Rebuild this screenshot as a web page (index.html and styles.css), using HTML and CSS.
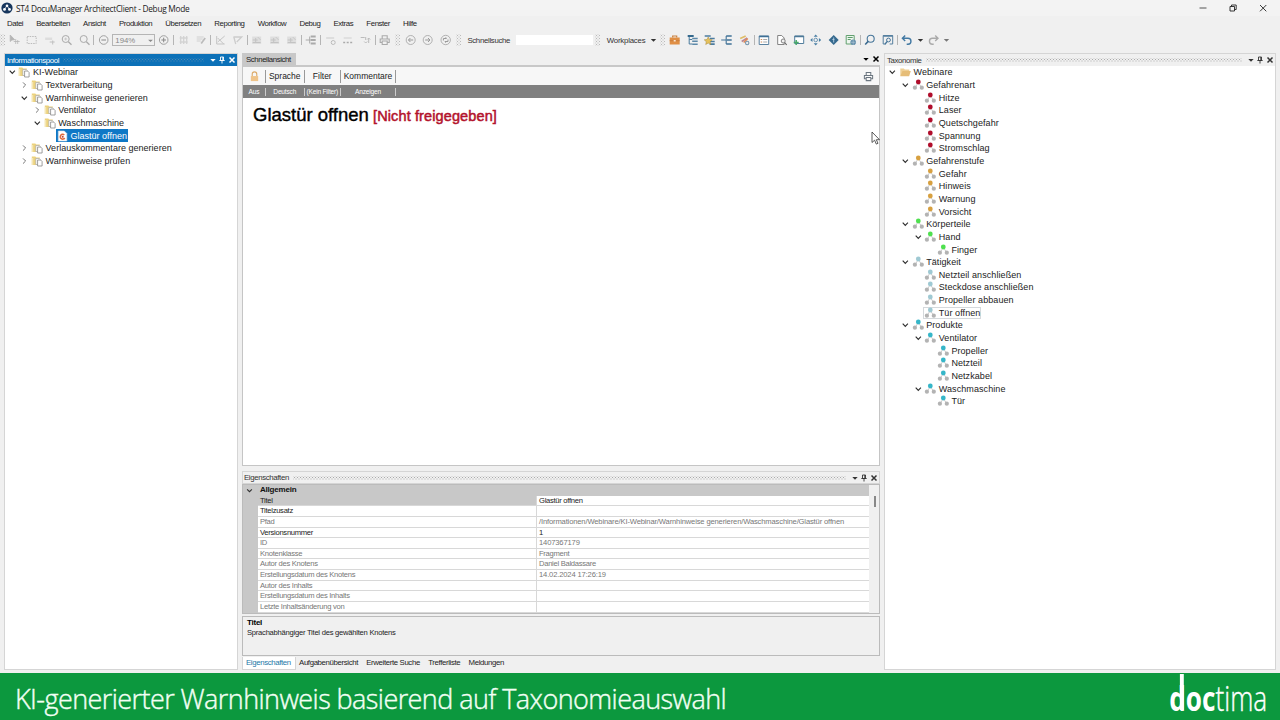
FILE: index.html
```
<!DOCTYPE html>
<html lang="de">
<head>
  <meta charset="UTF-8">
  <title>ST4 DocuManager ArchitectClient - Debug Mode</title>
  <link rel="stylesheet" href="styles.css">
</head>
<body>
  <!-- icon set -->
  <svg class="sprite" width="0" height="0">
    <symbol id="chev" viewBox="0 0 12 12"><path d="M3.4 4.7 6 7.3l2.6-2.6" fill="none" stroke="#333" stroke-width="1.2"/></symbol>
    <symbol id="chev-r" viewBox="0 0 12 12"><path d="M4.7 3.4 7.3 6 4.7 8.6" fill="none" stroke="#777" stroke-width="1"/></symbol>
    <symbol id="folder-doc" viewBox="0 0 12 12"><path d="M.5 1.500h3.500l1 1h3.500v7.500H.5z" fill="#ecd27e"/><path d="M.5 3h1.500v7H.5z" fill="#f5e6b3"/><path d="M4.500 3.500h3.500l1 1V9.500H4.500z" fill="#fff" stroke="#aaa" stroke-width=".7"/><path d="M6.300 5h3l1.500 1.500V11H6.300z" fill="#fff" stroke="#888" stroke-width=".8"/></symbol>
    <symbol id="folder" viewBox="0 0 12 12"><path d="M1 10V2.500h3.500l1 1H10V5" fill="#efcf95"/><path d="M1 10.200 3.200 5H11.500L9.800 10.200z" fill="#e6bd78"/></symbol>
    <symbol id="frag" viewBox="0 0 12 12"><path d="M2 1h6l2.500 2.500V11H2z" fill="#fff" stroke="#d8dee5" stroke-width=".6"/><path d="M8 5A2.400 2.400 0 1 0 8.400 8" fill="none" stroke="#df6b3d" stroke-width="1.500"/><circle cx="6.400" cy="6.700" r="1" fill="#b8453a"/></symbol>
    <symbol id="tax" viewBox="0 0 12 12"><path d="M6 3.500 2.800 8.500M6 3.500 9.400 8.500" stroke="#bbb" stroke-width=".8"/><circle cx="6" cy="3" r="2.400" fill="currentColor"/><circle cx="2.600" cy="8.700" r="2.100" fill="#b3b3b3"/><circle cx="9.500" cy="8.700" r="2.100" fill="#b3b3b3"/></symbol>
    <symbol id="down" viewBox="0 0 8 8"><path d="M1.300 3h5.400L4 5.800z" fill="currentColor"/></symbol>
    <symbol id="pin" viewBox="0 0 8 8"><path d="M2.500 1h3v3.500h-3zM1.300 4.500h5.400M4 4.500V7.500" fill="none" stroke="currentColor" stroke-width=".9"/><path d="M4.700 1v3.500" stroke="currentColor" stroke-width=".8"/></symbol>
    <symbol id="x" viewBox="0 0 8 8"><path d="m1.500 1.500 5 5m0-5-5 5" stroke="currentColor" stroke-width="1.500"/></symbol>
    <symbol id="cursor-add" viewBox="0 0 12 12"><path d="M1.500 1v6.500L3.200 6l2.800-.3zM7 5v5M5 7.500h6M9 6v4" fill="#b5b5b5" stroke="#b5b5b5" stroke-width=".8"/></symbol>
    <symbol id="marquee" viewBox="0 0 12 12"><path d="M1.500 2.500h9v7h-9z" fill="none" stroke="#bbb" stroke-dasharray="1.500 1"/></symbol>
    <symbol id="rect-arrow" viewBox="0 0 12 12"><path d="M1.500 3.500h7v2.500h-7z" fill="#ddd"/><path d="M6 8h5M9 6.500v4" stroke="#c0c0c0"/></symbol>
    <symbol id="zoom" viewBox="0 0 12 12"><circle cx="5" cy="5" r="3.500" fill="none" stroke="#aaa"/><path d="M7.700 7.700 10.800 10.800" stroke="#aaa" stroke-width="1.300"/><path d="M3.500 5h3M5 3.500v3" stroke="#bbb" stroke-width=".7"/></symbol>
    <symbol id="zoom-b" viewBox="0 0 12 12"><circle cx="5" cy="5" r="3.500" fill="none" stroke="#aaa"/><path d="M7.700 7.700 10.800 10.800" stroke="#aaa" stroke-width="1.300"/></symbol>
    <symbol id="minus" viewBox="0 0 12 12"><circle cx="6" cy="6" r="4.300" fill="none" stroke="#999" stroke-width=".9"/><path d="M3.700 6h4.600" stroke="#888"/></symbol>
    <symbol id="plus" viewBox="0 0 12 12"><circle cx="6" cy="6" r="4.300" fill="none" stroke="#999" stroke-width=".9"/><path d="M3.700 6h4.600M6 3.700v4.600" stroke="#888"/></symbol>
    <symbol id="grid" viewBox="0 0 12 12"><path d="M3 2v8M6 2v8M9 2v8M2 4h8M2 8h8" stroke="#d3d3d3" stroke-width="1.300"/></symbol>
    <symbol id="edit" viewBox="0 0 12 12"><path d="M2 3h7M2 5h6M2 7h4" stroke="#d0d0d0"/><path d="M10.500 4 6.500 9.500" stroke="#bbb" stroke-width="1.700"/></symbol>
    <symbol id="chart-x" viewBox="0 0 12 12"><path d="M2 2v8h8M3 4l6 6M3 8l7-6" fill="none" stroke="#c4c4c4"/></symbol>
    <symbol id="flag" viewBox="0 0 12 12"><path d="M2 2.500 4 10M2 3h8L5 8" fill="none" stroke="#ccc" stroke-width="1.300"/></symbol>
    <symbol id="table" viewBox="0 0 12 12"><path d="M1.500 2.500h9v7.500h-9z" fill="#dedede"/><path d="M2 6h5M2 8.500h8M5 4v5" stroke="#c3c3c3"/><path d="m7 3 3 3" stroke="#c9c9c9"/></symbol>
    <symbol id="tree-g" viewBox="0 0 12 12"><path d="M1 6h5M5 2.500v7" stroke="#aaa"/><path d="M6 2.500h5M6 6h5M6 9.500h5" stroke="#aaa" stroke-width="1.800"/></symbol>
    <symbol id="step" viewBox="0 0 12 12"><path d="M1.500 3h8v2h-8z" fill="#ddd"/><circle cx="8.500" cy="8.500" r="2" fill="none" stroke="#bbb"/></symbol>
    <symbol id="dots" viewBox="0 0 12 12"><path d="M2 3h8v2H2z" fill="#e0e0e0"/><path d="M1.500 8.500h2m1.500 0h2m1.500 0h2" stroke="#aaa" stroke-width="1.700"/></symbol>
    <symbol id="down-up" viewBox="0 0 12 12"><path d="M1 3.500h4M6 6V3M9 9V4M7.500 5.500 9 4l1.500 1.500M4.500 7.500 6 9l1.500-1.500" fill="none" stroke="#bbb"/></symbol>
    <symbol id="print" viewBox="0 0 12 12"><path d="M3.500 5V1.700h5V5M3 8.500H1.500V5h9v3.500H9M3.500 7h5v3.500h-5z" fill="none" stroke="currentColor" stroke-width="1.100"/></symbol>
    <symbol id="back" viewBox="0 0 12 12"><circle cx="6" cy="6" r="4.500" fill="none" stroke="#aaa" stroke-width=".9"/><path d="M8.500 6H4M5.700 4 3.700 6l2 2" fill="none" stroke="#999"/></symbol>
    <symbol id="fwd" viewBox="0 0 12 12"><circle cx="6" cy="6" r="4.500" fill="none" stroke="#aaa" stroke-width=".9"/><path d="M3.500 6H8M6.300 4l2 2-2 2" fill="none" stroke="#999"/></symbol>
    <symbol id="refresh" viewBox="0 0 12 12"><circle cx="6" cy="6" r="4.700" fill="none" stroke="#aaa" stroke-width=".9"/><path d="M3.700 6.500V4.500h3L6 3.300M8.300 5.500v2h-3L6 8.700" fill="none" stroke="#999"/></symbol>
    <symbol id="case" viewBox="0 0 12 12"><path d="M4 3.500V2h4v1.500" fill="none" stroke="#c9803f" stroke-width="1.200"/><path d="M1 3.500h10v7H1z" fill="#e08f45"/><path d="M1 6.700h10" stroke="#c47838" stroke-width=".8"/><path d="M5 6h2v1.500H5z" fill="#fbe6cf"/></symbol>
    <symbol id="tree-b" viewBox="0 0 12 12"><path d="M2.500 2v8h3M2.500 5.500h3" fill="none" stroke="#4a7b9d"/><path d="M1 2h6" stroke="#35698d" stroke-width="2"/><path d="M5.500 4.500H11M5.500 7.300H11M5.500 10.200H11" stroke="#5d89a9" stroke-width="1.500"/></symbol>
    <symbol id="tree-star" viewBox="0 0 12 12"><path d="M1 2h6M6 4.500h5M6 7.500h5M6 10.200h5" stroke="#4c7c9f" stroke-width="1.700"/><path d="m4.500 3 1.200 2.500 2.800.3-2.100 1.900.6 2.800-2.500-1.400L2 10.500l.6-2.800L.5 5.800l2.800-.3z" fill="#e5c15c" stroke="#a88b3b" stroke-width=".5"/></symbol>
    <symbol id="branch" viewBox="0 0 12 12"><path d="M.5 6h5.500M5.500 2v8" stroke="#3f7197" stroke-width="1.100"/><path d="M5.500 2H11M6 6h5M5.500 10H11" stroke="#3f7197" stroke-width="1.700"/></symbol>
    <symbol id="pens" viewBox="0 0 12 12"><path d="M1.500 4.500 7 2" stroke="#e0bd68" stroke-width="1.800"/><path d="M3 7.500 8.500 4" stroke="#b98694" stroke-width="1.500"/><path d="m5 8.500 4-4" stroke="#e48a55" stroke-width="1.700"/><circle cx="8.500" cy="9" r="1.700" fill="none" stroke="#7998af" stroke-width="1.100"/></symbol>
    <symbol id="list" viewBox="0 0 12 12"><path d="M1.500 2h9.500v8.500H1.500z" fill="#fff" stroke="#5a82a0"/><path d="M1.500 2.500h9.500" stroke="#3e6f95" stroke-width="1.500"/><path d="M3 5.500h1.500M3 8h1.500" stroke="#d28b59"/><path d="M5.500 5.500H9.500M5.500 8H9.500" stroke="#aaa"/></symbol>
    <symbol id="doc-zoom" viewBox="0 0 12 12"><path d="M2 1.500h4l2.500 2.500V10.500H2z" fill="#fff" stroke="#777" stroke-width=".9"/><circle cx="7.500" cy="7" r="2" fill="#eee" stroke="#777" stroke-width=".9"/><path d="m9 8.500 2 2.500" stroke="#666" stroke-width="1.200"/></symbol>
    <symbol id="win-add" viewBox="0 0 12 12"><path d="M2 2h9v7.500H2z" fill="#fff" stroke="#527e9d"/><path d="M2 2.500h9" stroke="#4c7897" stroke-width="1.600"/><path d="M1 8.500h5M3.500 6v5" stroke="#48a86a" stroke-width="1.500"/></symbol>
    <symbol id="move" viewBox="0 0 12 12"><path d="m6 .5 2 2.300H4zM6 11.500 8 9.200H4zM.5 6l2.300-2v4zM11.500 6 9.200 4v4z" fill="#477da3"/><circle cx="6" cy="6" r="1.800" fill="none" stroke="#6c96b4"/></symbol>
    <symbol id="diamond" viewBox="0 0 12 12"><path d="m6 1 5 5-5 5-5-5z" fill="#35698e"/><path d="M6 3.500v5M4.700 5.500h2" stroke="#b9d3e5" stroke-width=".9"/></symbol>
    <symbol id="globe-doc" viewBox="0 0 12 12"><path d="M1.500 1.500h8V10h-8z" fill="#edf5ee" stroke="#62a06f"/><path d="M3 3.500h5M3 5.500h3" stroke="#5a9d69"/><circle cx="8.500" cy="8.300" r="2.800" fill="#658fab"/><path d="M6 8.300h5M8.500 5.500v5.500" stroke="#bed0dc" stroke-width=".5"/></symbol>
    <symbol id="search" viewBox="0 0 12 12"><circle cx="7" cy="4.700" r="3.500" fill="none" stroke="#47769a" stroke-width="1.100"/><path d="M4.500 7.400 1.500 10.500" stroke="#3a6a8f" stroke-width="1.600"/></symbol>
    <symbol id="search-win" viewBox="0 0 12 12"><path d="M3 10H1.500V1.500h9.500V10H8" fill="none" stroke="#557f9f"/><path d="M1.500 2h9.500" stroke="#557f9f" stroke-width="1.500"/><circle cx="6.800" cy="6" r="1.900" fill="none" stroke="#47769a"/><path d="M5.500 7.500 3 10.500" stroke="#47769a" stroke-width="1.300"/></symbol>
    <symbol id="undo" viewBox="0 0 12 12"><path d="M4.500 1.500 1.700 4.300 4.500 7M2 4.300h5.300a2.700 2.700 0 0 1 0 5.900H6" fill="none" stroke="currentColor" stroke-width="1.400"/></symbol>
  </svg>

  <div class="window">
    <header class="titlebar">
      <svg class="app-icon" viewBox="0 0 12 12"><circle cx="6" cy="6" r="5.600" fill="#17365d"/><path d="M6 3.500 3.500 7.500M6 3.500l2.500 4" stroke="#fff" stroke-width=".7"/><circle cx="6" cy="3.700" r="1.300" fill="#fff"/><circle cx="3.500" cy="7.400" r="1.400" fill="#fff"/><circle cx="8.500" cy="7.400" r="1.400" fill="#fff"/></svg>
      <span>ST4 DocuManager ArchitectClient - Debug Mode</span>
      <div class="win-buttons">
        <svg viewBox="0 0 10 10"><path d="M1.500 5h7" stroke="#555" stroke-width="1"/></svg>
        <svg viewBox="0 0 10 10"><path d="M2 3.500h4.500V8H2zM3.500 3.500V2h4.700v4.500H6.500" fill="none" stroke="#222" stroke-width=".9"/></svg>
        <svg viewBox="0 0 10 10"><path d="m2 2 6.300 6.300m0-6.300L2 8.300" stroke="#222" stroke-width=".9"/></svg>
      </div>
    </header>

    <nav class="menu">
      <span>Datei</span><span>Bearbeiten</span><span>Ansicht</span><span>Produktion</span><span>Übersetzen</span><span>Reporting</span><span>Workflow</span><span>Debug</span><span>Extras</span><span>Fenster</span><span>Hilfe</span>
    </nav>

    <div class="toolbar">
      <i class="grip"></i>
      <svg><use href="#cursor-add"/></svg><svg><use href="#marquee"/></svg><svg><use href="#rect-arrow"/></svg><svg><use href="#zoom"/></svg><svg><use href="#zoom-b"/></svg>
      <i class="sep"></i>
      <svg><use href="#minus"/></svg>
      <div class="combo"><span>194%</span><svg><use href="#down"/></svg></div>
      <svg><use href="#plus"/></svg>
      <i class="sep"></i>
      <svg><use href="#grid"/></svg><svg><use href="#edit"/></svg>
      <i class="sep"></i>
      <svg><use href="#chart-x"/></svg><svg><use href="#flag"/></svg>
      <i class="sep"></i>
      <svg><use href="#table"/></svg><svg><use href="#table"/></svg><svg><use href="#table"/></svg>
      <i class="sep"></i>
      <svg><use href="#tree-g"/></svg>
      <i class="sep"></i>
      <svg><use href="#step"/></svg><svg><use href="#dots"/></svg><svg><use href="#down-up"/></svg>
      <i class="sep"></i>
      <svg class="grey"><use href="#print"/></svg>
      <i class="grip"></i>
      <svg><use href="#back"/></svg><svg><use href="#fwd"/></svg><svg><use href="#refresh"/></svg>
      <i class="grip"></i>
      <label class="search-label">Schnellsuche</label><div class="search"></div>
      <i class="grip"></i>
      <span class="workplaces">Workplaces</span><svg class="drop"><use href="#down"/></svg>
      <i class="grip"></i>
      <svg><use href="#case"/></svg><svg><use href="#tree-b"/></svg><svg><use href="#tree-star"/></svg><svg><use href="#branch"/></svg><svg><use href="#pens"/></svg>
      <i class="sep"></i>
      <svg><use href="#list"/></svg><svg><use href="#doc-zoom"/></svg><svg><use href="#win-add"/></svg><svg><use href="#move"/></svg><svg><use href="#diamond"/></svg><svg><use href="#globe-doc"/></svg>
      <i class="sep"></i>
      <svg><use href="#search"/></svg><svg><use href="#search-win"/></svg>
      <i class="sep"></i>
      <svg class="blue"><use href="#undo"/></svg><svg class="drop"><use href="#down"/></svg>
      <svg class="grey flip"><use href="#undo"/></svg><svg class="drop faded"><use href="#down"/></svg>
    </div>

    <main class="workspace">
      <section class="pane pool">
        <div class="pane-title active"><span>Informationspool</span><i class="dots"></i><svg><use href="#down"/></svg><svg><use href="#pin"/></svg><svg><use href="#x"/></svg></div>
        <div class="tree">
          <div class="row"><svg><use href="#chev"/></svg><svg><use href="#folder-doc"/></svg><span>KI-Webinar</span></div>
          <div class="row l1"><svg><use href="#chev-r"/></svg><svg><use href="#folder-doc"/></svg><span>Textverarbeitung</span></div>
          <div class="row l1"><svg><use href="#chev"/></svg><svg><use href="#folder-doc"/></svg><span>Warnhinweise generieren</span></div>
          <div class="row l2"><svg><use href="#chev-r"/></svg><svg><use href="#folder-doc"/></svg><span>Ventilator</span></div>
          <div class="row l2"><svg><use href="#chev"/></svg><svg><use href="#folder-doc"/></svg><span>Waschmaschine</span></div>
          <div class="row l3 leaf"><div class="selected"><svg><use href="#frag"/></svg><span>Glastür offnen</span></div></div>
          <div class="row l1"><svg><use href="#chev-r"/></svg><svg><use href="#folder-doc"/></svg><span>Verlauskommentare generieren</span></div>
          <div class="row l1"><svg><use href="#chev-r"/></svg><svg><use href="#folder-doc"/></svg><span>Warnhinweise prüfen</span></div>
        </div>
      </section>

      <div class="center">
        <div class="doc-tabs"><span>Schnellansicht</span><svg><use href="#down"/></svg><svg><use href="#x"/></svg></div>
        <section class="preview">
          <div class="filters">
            <div><svg class="lock" viewBox="0 0 12 12"><path d="M3.500 6V3.500a2.500 2.500 0 0 1 5 0V6" fill="none" stroke="#dba968" stroke-width="1.200"/><path d="M2 5.500h8v5.500H2z" fill="#efc48a"/></svg></div>
            <div>Sprache</div><div>Filter</div><div>Kommentare</div>
            <svg class="printer"><use href="#print"/></svg>
          </div>
          <div class="filter-values"><div>Aus</div><div>Deutsch</div><div>(Kein Filter)</div><div>Anzeigen</div></div>
          <h1>Glastür offnen <span>[Nicht freigegeben]</span></h1>
        </section>

        <section class="props">
          <div class="pane-title"><span>Eigenschaften</span><i class="dots"></i><svg><use href="#down"/></svg><svg><use href="#pin"/></svg><svg><use href="#x"/></svg></div>
          <div class="grid">
            <div class="gutter"><svg><use href="#chev"/></svg></div>
            <div class="fields">
              <div class="category">Allgemein</div>
              <div class="field current"><span>Titel</span><span>Glastür offnen</span></div>
              <div class="field"><span>Titelzusatz</span><span></span></div>
              <div class="field readonly"><span>Pfad</span><span class="path">/Informationen/Webinare/KI-Webinar/Warnhinweise generieren/Waschmaschine/Glastür offnen</span></div>
              <div class="field"><span>Versionsnummer</span><span>1</span></div>
              <div class="field readonly"><span>ID</span><span class="num">1407367179</span></div>
              <div class="field readonly"><span>Knotenklasse</span><span>Fragment</span></div>
              <div class="field readonly"><span>Autor des Knotens</span><span>Daniel Baldassare</span></div>
              <div class="field readonly"><span>Erstellungsdatum des Knotens</span><span class="num">14.02.2024 17:26:19</span></div>
              <div class="field readonly"><span>Autor des Inhalts</span><span></span></div>
              <div class="field readonly"><span>Erstellungsdatum des Inhalts</span><span></span></div>
              <div class="field readonly"><span>Letzte Inhaltsänderung von</span><span></span></div>
            </div>
            <div class="scroll"><i></i></div>
          </div>
          <div class="help"><b>Titel</b><p>Sprachabhängiger Titel des gewählten Knotens</p></div>
        </section>
        <div class="bottom-tabs"><span class="on">Eigenschaften</span><span>Aufgabenübersicht</span><span>Erweiterte Suche</span><span>Trefferliste</span><span>Meldungen</span></div>
      </div>

      <section class="pane taxonomy">
        <div class="pane-title"><span>Taxonomie</span><i class="dots"></i><svg><use href="#down"/></svg><svg><use href="#pin"/></svg><svg><use href="#x"/></svg></div>
        <div class="tree">
          <div class="row"><svg><use href="#chev"/></svg><svg><use href="#folder"/></svg><span>Webinare</span></div>
          <div class="row l1 red"><svg><use href="#chev"/></svg><svg><use href="#tax"/></svg><span>Gefahrenart</span></div>
          <div class="row l2 leaf red"><svg><use href="#tax"/></svg><span>Hitze</span></div>
          <div class="row l2 leaf red"><svg><use href="#tax"/></svg><span>Laser</span></div>
          <div class="row l2 leaf red"><svg><use href="#tax"/></svg><span>Quetschgefahr</span></div>
          <div class="row l2 leaf red"><svg><use href="#tax"/></svg><span>Spannung</span></div>
          <div class="row l2 leaf red"><svg><use href="#tax"/></svg><span>Stromschlag</span></div>
          <div class="row l1 amber"><svg><use href="#chev"/></svg><svg><use href="#tax"/></svg><span>Gefahrenstufe</span></div>
          <div class="row l2 leaf amber"><svg><use href="#tax"/></svg><span>Gefahr</span></div>
          <div class="row l2 leaf amber"><svg><use href="#tax"/></svg><span>Hinweis</span></div>
          <div class="row l2 leaf amber"><svg><use href="#tax"/></svg><span>Warnung</span></div>
          <div class="row l2 leaf amber"><svg><use href="#tax"/></svg><span>Vorsicht</span></div>
          <div class="row l1 green"><svg><use href="#chev"/></svg><svg><use href="#tax"/></svg><span>Körperteile</span></div>
          <div class="row l2 green"><svg><use href="#chev"/></svg><svg><use href="#tax"/></svg><span>Hand</span></div>
          <div class="row l3 leaf green"><svg><use href="#tax"/></svg><span>Finger</span></div>
          <div class="row l1 pale"><svg><use href="#chev"/></svg><svg><use href="#tax"/></svg><span>Tätigkeit</span></div>
          <div class="row l2 leaf pale"><svg><use href="#tax"/></svg><span>Netzteil anschließen</span></div>
          <div class="row l2 leaf pale"><svg><use href="#tax"/></svg><span>Steckdose anschließen</span></div>
          <div class="row l2 leaf pale"><svg><use href="#tax"/></svg><span>Propeller abbauen</span></div>
          <div class="row l2 leaf pale"><div class="focused"><svg><use href="#tax"/></svg><span>Tür offnen</span></div></div>
          <div class="row l1 teal"><svg><use href="#chev"/></svg><svg><use href="#tax"/></svg><span>Produkte</span></div>
          <div class="row l2 teal"><svg><use href="#chev"/></svg><svg><use href="#tax"/></svg><span>Ventilator</span></div>
          <div class="row l3 leaf teal"><svg><use href="#tax"/></svg><span>Propeller</span></div>
          <div class="row l3 leaf teal"><svg><use href="#tax"/></svg><span>Netzteil</span></div>
          <div class="row l3 leaf teal"><svg><use href="#tax"/></svg><span>Netzkabel</span></div>
          <div class="row l2 teal"><svg><use href="#chev"/></svg><svg><use href="#tax"/></svg><span>Waschmaschine</span></div>
          <div class="row l3 leaf teal"><svg><use href="#tax"/></svg><span>Tür</span></div>
        </div>
      </section>
    </main>

    <footer class="caption">
      <p>KI-generierter Warnhinweis basierend auf Taxonomieauswahl</p>
      <svg class="logo" width="100" height="47" viewBox="0 0 100 47" fill="#fff">
        <g transform="scale(.77 1)"><text x=".4" y="38"><tspan class="logo-bold">doc</tspan><tspan class="logo-light">tima</tspan></text></g>
        <!-- long stem of the d -->
        <rect x="10.900" y="1" width="3.900" height="36"/>
      </svg>
    </footer>
  </div>

  <svg class="cursor" viewBox="0 0 10 14"><path d="M1 1v10.500l2.600-2.300 1.700 3.900 1.700-.8-1.700-3.600h3.200z" fill="#fff" stroke="#333" stroke-width=".8"/></svg>
</body>
</html>
```
FILE: styles.css
```
* {
  box-sizing: border-box;
}
body {
  margin: 0;
  width: 1280px;
  height: 720px;
  overflow: hidden;
  background: #f0f0f0;
  font-family: "Liberation Sans", Arial, sans-serif;
  font-size: 7.8px;
  letter-spacing: -0.4px;
  color: #222;
  white-space: nowrap;
}
.sprite {
  position: absolute;
}
svg {
  flex: none;
}
.window {
  display: flex;
  flex-direction: column;
  height: 720px;
}

/* title and menu */
.titlebar {
  display: flex;
  align-items: center;
  height: 16px;
  padding: 0 12px 0 1px;
  background: #f3f3f3;
  font-family: "Open Sans", sans-serif;
  font-size: 8.3px;
  letter-spacing: -0.28px;
}
.app-icon {
  width: 12px;
  height: 12px;
  margin-right: 3px;
}
.win-buttons {
  display: flex;
  gap: 20px;
  margin-left: auto;
}
.win-buttons svg {
  width: 10px;
  height: 10px;
}
.menu {
  display: flex;
  gap: 13.1px;
  height: 15px;
  padding: 0 7px;
  line-height: 15px;
}

/* toolbar */
.toolbar {
  display: flex;
  align-items: center;
  height: 18px;
  color: #333;
  letter-spacing: -0.3px;
}
.toolbar > svg {
  width: 17.4px;
  height: 12px;
}
.toolbar .grip {
  width: 5px;
  height: 12px;
  margin: 0 1.4px 0 2px;
  background-image: radial-gradient(circle, #bbb 0.7px, transparent 0.9px), radial-gradient(circle, #bbb 0.7px, transparent 0.9px);
  background-size: 3px 3px;
  background-position: 0 0, 1.5px 1.5px;
}
.toolbar .grip:first-child {
  margin: 0 1px 0 0;
}
.toolbar .sep {
  width: 1px;
  height: 10px;
  margin: 0 0.5px;
  background: #b5b5b5;
}
.combo {
  display: flex;
  align-items: center;
  justify-content: space-between;
  width: 43px;
  height: 12px;
  padding-left: 2px;
  border: 1px solid #b5b5b5;
  color: #888;
  letter-spacing: 0;
}
.combo svg {
  width: 7px;
  height: 7px;
}
.search-label {
  width: 54px;
  padding-left: 5px;
}
.search {
  width: 77px;
  height: 10px;
  background: #fff;
}
.workplaces {
  width: 45px;
  margin-left: 2px;
  padding-left: 3px;
  letter-spacing: -0.2px;
}
.toolbar svg.drop {
  width: 9px;
  height: 8px;
}
.grey {
  color: #aaa;
}
.blue {
  color: #4279a3;
}
.flip {
  transform: scaleX(-1);
}
.faded {
  color: #777;
}

/* docked panes */
.workspace {
  display: flex;
  gap: 4px;
  height: 617px;
  margin: 4px 4px 3px;
}
.pane {
  border: 1px solid #d5d5d5;
  background: #fff;
}
.pool {
  width: 234px;
}
.taxonomy {
  width: 392px;
}
.pane-title {
  display: flex;
  align-items: center;
  height: 12px;
  padding: 0 1px 0 2px;
  background: #f0f0f0;
  color: #333;
  letter-spacing: -0.35px;
}
.pane-title.active {
  background: #0c71b8;
  color: #fff;
}
.pane-title .dots {
  flex: 1;
  height: 4px;
  margin: 0 3px 0 4px;
  background-image: radial-gradient(circle, #aaa 0.5px, transparent 0.8px), radial-gradient(circle, #aaa 0.5px, transparent 0.8px);
  background-size: 3px 3px;
  background-position: 0 0, 1.5px 1.5px;
}
.pane-title.active .dots {
  opacity: 0.45;
}
.pane-title svg {
  width: 8px;
  height: 8px;
  margin-left: 1.6px;
}
.tree {
  padding-left: 0.8px;
  font-size: 9px;
  letter-spacing: 0.02px;
  color: #222;
}
.taxonomy .tree {
  padding-left: 1.4px;
  letter-spacing: 0.08px;
}
.row {
  display: flex;
  align-items: center;
  height: 12.67px;
}
.row svg {
  width: 12.6px;
  height: 12px;
}
.row span {
  padding-left: 2px;
}
.l1 { padding-left: 12.6px; }
.l2 { padding-left: 25.2px; }
.l3 { padding-left: 37.8px; }
.l2.leaf { padding-left: 37.8px; }
.l3.leaf { padding-left: 50.4px; }
.pool .l3.leaf { padding-left: 50px; }
.selected, .focused {
  display: flex;
  align-items: center;
  height: 12.6px;
}
.selected {
  padding-right: 1px;
  background: #0f78c6;
  color: #fff;
}
.focused {
  margin-left: -1px;
  border: 1px solid #d5d9dc;
}
.red svg:nth-last-child(2) { color: #b00d2b; }
.amber svg:nth-last-child(2) { color: #d7a040; }
.green svg:nth-last-child(2) { color: #4fe04f; }
.pale svg:nth-last-child(2) { color: #9fc9d3; }
.teal svg:nth-last-child(2) { color: #36b6c8; }

/* center column */
.center {
  display: flex;
  flex-direction: column;
  width: 638px;
}
.doc-tabs {
  display: flex;
  align-items: center;
  height: 12px;
}
.doc-tabs span {
  width: 54px;
  height: 12px;
  margin-right: auto;
  padding-left: 4px;
  background: #c8c8c8;
  line-height: 14px;
}
.doc-tabs svg {
  width: 8px;
  height: 8px;
  margin-left: 2px;
  color: #000;
}
.preview {
  height: 401px;
  border: 1px solid #c5c5c5;
  border-top: 2px solid #c8c8c8;
  background: #fff;
  letter-spacing: 0;
}
.filters, .filter-values {
  display: grid;
  grid-template-columns: 23px 38.5px 36.5px 55px 1fr;
  align-items: center;
  text-align: center;
}
.filters {
  height: 18px;
  background: #f7f7f7;
  font-size: 8.5px;
}
.filters div {
  height: 13px;
  border-right: 1px solid #999;
  line-height: 13px;
}
.lock {
  width: 11px;
  height: 11px;
  margin-top: 1px;
}
.printer {
  width: 11px;
  height: 11px;
  margin-right: 5px;
  justify-self: end;
  color: #6b7680;
}
.filter-values {
  height: 13px;
  background: #808080;
  color: #fff;
  font-size: 6.6px;
  letter-spacing: -0.2px;
}
.filter-values div {
  height: 8px;
  border-right: 1px solid #ccc;
  line-height: 8px;
}
.preview h1 {
  margin: 6px 0 0 10px;
  color: #000;
  font-size: 18.5px;
  font-weight: normal;
  line-height: 22px;
  -webkit-text-stroke: 0.4px;
}
.preview h1 span {
  margin-left: -1px;
  color: #b3122c;
  font-size: 14.5px;
  letter-spacing: 0.12px;
  -webkit-text-stroke: 0.5px;
}

/* property grid */
.props {
  height: 186px;
  margin-top: 5px;
}
.props .pane-title {
  height: 13px;
  padding-left: 1px;
  border: 1px solid #d5d5d5;
}
.grid {
  display: flex;
  height: 130px;
  border: 1px solid #bbb;
}
.gutter {
  width: 15px;
  background: #c8c8c8;
}
.gutter svg {
  width: 13px;
  height: 11px;
}
.fields {
  width: 611px;
  background: #fff;
}
.category {
  height: 10.6px;
  padding-left: 2px;
  background: #c8c8c8;
  color: #111;
  font-size: 8px;
  font-weight: bold;
  letter-spacing: -0.2px;
  line-height: 10.6px;
}
.field {
  display: flex;
  height: 10.65px;
  border-bottom: 1px solid #d8d8d8;
  line-height: 10.6px;
  font-size: 7.6px;
  letter-spacing: -0.28px;
}
.field span {
  padding-left: 2px;
}
.field span:first-child {
  width: 279px;
  border-right: 1px solid #d8d8d8;
}
.field.current span:first-child {
  background: #c8c8c8;
}
.readonly {
  color: #777;
}
.num, .path {
  letter-spacing: -0.15px;
}
.scroll {
  flex: 1;
  padding: 11px 0 0 5px;
}
.scroll i {
  display: block;
  width: 1.5px;
  height: 11px;
  background: #888;
}
.help {
  height: 40px;
  margin-top: 2px;
  padding: 1px 4px;
  border: 1px solid #bbb;
  font-size: 7.6px;
  letter-spacing: -0.24px;
}
.help b {
  display: block;
  font-size: 8px;
  line-height: 10px;
  color: #000;
}
.help p {
  margin: 0;
  line-height: 10px;
}
.bottom-tabs {
  display: flex;
  gap: 8.3px;
  height: 13px;
  line-height: 12px;
  letter-spacing: -0.36px;
}
.bottom-tabs .on {
  margin-right: -5px;
  padding: 0 4px 0 3px;
  border: 1px solid #d5d5d5;
  border-top: 0;
  background: #fff;
  color: #1c78a8;
}

/* caption bar */
.caption {
  display: flex;
  justify-content: space-between;
  height: 47px;
  padding: 0 11px 0 15px;
  background: #0c983e;
  color: #f2fff4;
  letter-spacing: 0;
}
.caption p {
  margin: 0;
  font-family: "Open Sans", sans-serif;
  font-size: 27px;
  font-weight: 300;
  letter-spacing: -0.57px;
  line-height: 52px;
  -webkit-text-stroke: 0.4px;
}
.logo-bold {
  font: 700 34px "Open Sans", sans-serif;
}
.logo-light {
  font: 300 34px "Open Sans", sans-serif;
  stroke: #fff;
  stroke-width: 0.4px;
}
.cursor {
  position: absolute;
  left: 871px;
  top: 131px;
  width: 10px;
  height: 14px;
}
```
